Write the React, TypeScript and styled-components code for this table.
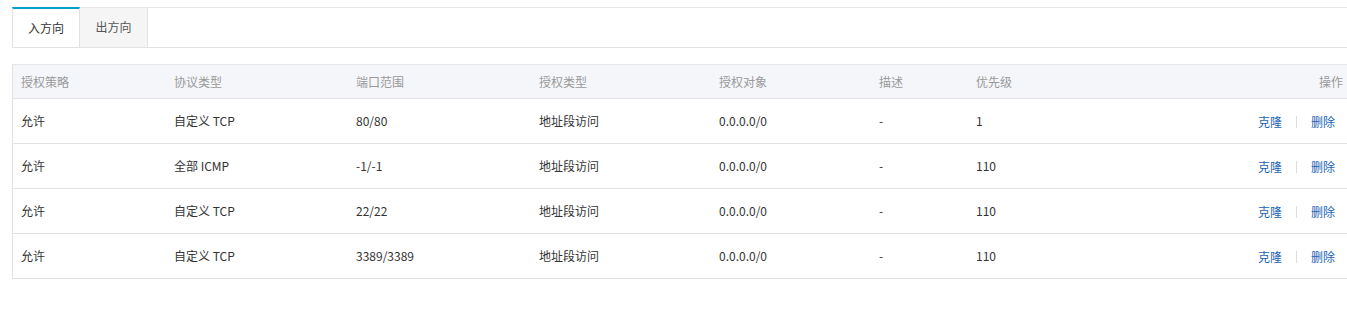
import React, { useState } from 'react'
import styled, { createGlobalStyle } from 'styled-components'

const GlobalStyle = createGlobalStyle`
  body {
    margin: 0;
    background: #fff;
    font-family: "Noto Sans CJK SC", "Liberation Sans", sans-serif;
    font-size: 12px;
    line-height: 16px;
    color: #333;
  }
`

const Page = styled.div`
  padding: 7px 0 0 12px;
`

const TabBar = styled.div`
  display: flex;
  border-top: 1px solid #e7e7e7;
  border-bottom: 1px solid #e2e2e2;
  height: 39px;
`

const Tab = styled.div<{ active?: boolean }>`
  display: flex;
  align-items: center;
  justify-content: center;
  width: 68px;
  box-sizing: border-box;
  height: ${({ active }) => (active ? '40px' : '39px')};
  margin-top: ${({ active }) => (active ? '-1px' : '0')};
  padding-bottom: ${({ active }) => (active ? '0' : '1px')};
  background: ${({ active }) => (active ? '#fff' : '#f5f5f5')};
  border-top: ${({ active }) => (active ? '2px solid #00a0c8' : 'none')};
  border-left: ${({ active }) => (active ? '1px solid #e2e2e2' : 'none')};
  border-right: 1px solid #e2e2e2;
  color: ${({ active }) => (active ? '#333' : '#555')};
  cursor: pointer;
`

const Table = styled.div`
  margin-top: 16px;
  border-left: 1px solid #e2e2e2;
  border-top: 1px solid #e7e7e7;
`

const Row = styled.div<{ head?: boolean }>`
  display: grid;
  grid-template-columns: 153px 182px 183px 180px 160px 97px 1fr;
  align-items: center;
  height: ${({ head }) => (head ? '33px' : '44px')};
  background: ${({ head }) => (head ? '#f5f6fa' : '#fff')};
  border-bottom: 1px solid #e2e2e2;
  color: ${({ head }) => (head ? '#999' : '#333')};
  padding-left: 8px;
`

const Cell = styled.div`
  white-space: nowrap;
`

const LastCell = styled.div<{ pad: number }>`
  display: flex;
  align-items: center;
  justify-content: space-between;
  padding-right: ${({ pad }) => pad}px;
  white-space: nowrap;
`

const Actions = styled.div`
  display: flex;
  align-items: center;
  padding-top: 2px;
`

const Link = styled.a`
  color: #1a63b8;
  text-decoration: none;
  cursor: pointer;
`

const Sep = styled.span`
  display: inline-block;
  width: 1px;
  height: 12px;
  background: #ddd;
  margin: 0 14px;
`

const rules = [
  { proto: '自定义 TCP', port: '80/80', prio: '1' },
  { proto: '全部 ICMP', port: '-1/-1', prio: '110' },
  { proto: '自定义 TCP', port: '22/22', prio: '110' },
  { proto: '自定义 TCP', port: '3389/3389', prio: '110' },
]

export default function App() {
  const [dir, setDir] = useState('in')
  return (
    <Page>
      <GlobalStyle />
      <TabBar>
        <Tab active={dir === 'in'} onClick={() => setDir('in')}>入方向</Tab>
        <Tab active={dir === 'out'} onClick={() => setDir('out')}>出方向</Tab>
      </TabBar>
      <Table>
        <Row head>
          <Cell>授权策略</Cell>
          <Cell>协议类型</Cell>
          <Cell>端口范围</Cell>
          <Cell>授权类型</Cell>
          <Cell>授权对象</Cell>
          <Cell>描述</Cell>
          <LastCell pad={4}>
            <span>优先级</span>
            <span>操作</span>
          </LastCell>
        </Row>
        {rules.map((r, i) => (
          <Row key={i}>
            <Cell>允许</Cell>
            <Cell>{r.proto}</Cell>
            <Cell>{r.port}</Cell>
            <Cell>地址段访问</Cell>
            <Cell>0.0.0.0/0</Cell>
            <Cell>-</Cell>
            <LastCell pad={12}>
              <span>{r.prio}</span>
              <Actions>
                <Link>克隆</Link>
                <Sep />
                <Link>删除</Link>
              </Actions>
            </LastCell>
          </Row>
        ))}
      </Table>
    </Page>
  )
}
